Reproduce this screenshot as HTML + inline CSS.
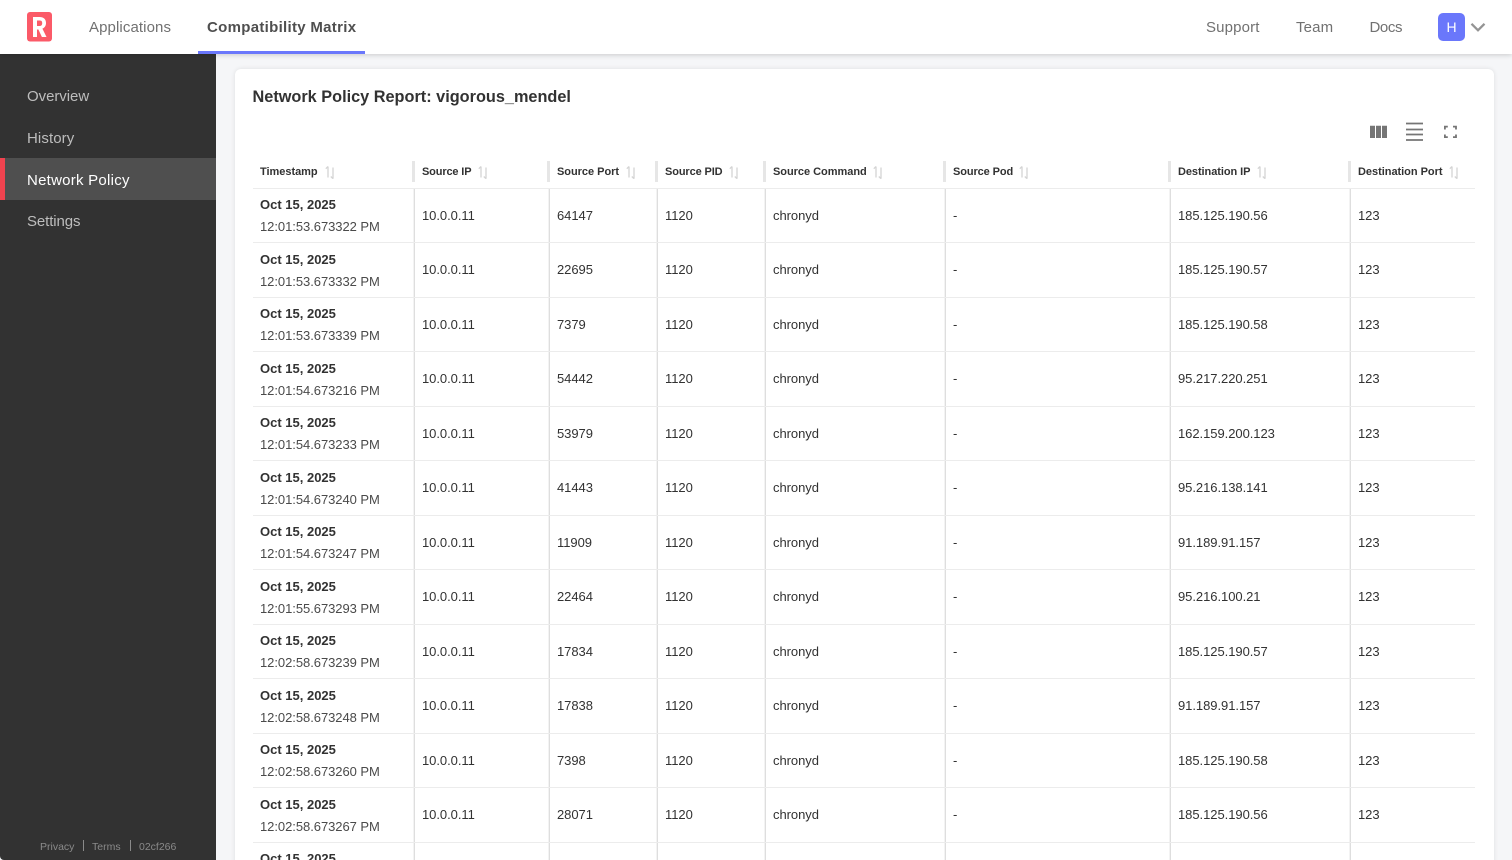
<!DOCTYPE html>
<html lang="en"><head><meta charset="utf-8"><title>Network Policy Report</title>
<style>
*{box-sizing:border-box}
html,body{margin:0;padding:0;width:1512px;height:860px;overflow:hidden;background:#f5f6f8;font-family:"Liberation Sans",sans-serif;color:#323232}
#w{position:relative;width:1512px;height:860px;overflow:hidden;background:#f5f6f8}
.abs,.t,.h,.hd,.vd,.hl,.c{position:absolute}
#top{position:absolute;left:0;top:0;width:1512px;height:54px;background:#fff;box-shadow:0 1px 5px rgba(0,0,0,.18);z-index:5}
.n{position:absolute;top:18px;font-size:15px;line-height:20px;color:#717171;letter-spacing:.15px;white-space:nowrap}
#side{position:absolute;left:0;top:54px;width:216px;height:806px;background:#323232;border-bottom-left-radius:4px;z-index:3}
.s{position:absolute;left:27px;font-size:15px;line-height:20px;color:#bdbdbd;letter-spacing:.1px;white-space:nowrap}
.f{position:absolute;top:786px;font-size:10.5px;line-height:14px;color:#8a8a8a;white-space:nowrap}
#card{position:absolute;left:235px;top:69px;width:1259px;height:820px;background:#fff;border-radius:6px;box-shadow:0 0 5px rgba(0,0,0,.1)}
.h{top:166px;font-size:11px;font-weight:700;line-height:13px;color:#323232;white-space:nowrap;letter-spacing:-.03px}
.hd{top:161px;width:2.500px;height:21px;background:#e6e6e6}
.vd{top:188px;width:2px;height:672px;background:linear-gradient(90deg,#f3f3f3 50%,#dedede 50%)}
.hl{left:253px;width:1222px;height:1px;background:#ececec}
.r{position:absolute;left:0;width:1512px;height:54px}
.r span{position:absolute;top:20px;font-size:13px;line-height:16px;color:#323232;white-space:nowrap;letter-spacing:-.05px}
.x span{top:19.500px}
.r .d{position:absolute;left:260px;top:9px;font-weight:700;color:#323232;letter-spacing:0}
.r .m{position:absolute;left:260px;top:31px;color:#4a4a4a}
.a{left:422px}.b{left:557px}.p{left:665px}.e{left:773px}.o{left:953px}.i{left:1178px}.q{left:1358px}
.sort{position:absolute;top:166px;width:11px;height:13px}
</style></head><body>
<svg width="0" height="0" style="position:absolute"><defs>
<symbol id="so" viewBox="0 0 11 13"><path d="M3 11.500V.5M.8 2.700 3 .5M8 1.500v11.200M5.800 10.500 8 12.700" fill="none" stroke="#d4d4d4" stroke-width="1.300"/></symbol>
</defs></svg>
<div id="w">
<div id="top">
<svg style="position:absolute;left:27px;top:12px" width="25" height="30" viewBox="0 0 25 30"><rect width="25" height="29.500" rx="3" fill="#fb5a68"/><path fill-rule="evenodd" d="M6 25V5h6.500c4 0 6.500 2 6.500 6 0 2.800-1.300 4.700-3.600 5.600L19.500 25h-4.600l-3.500-7.500H10V25zM10 14h2.300c2 0 2.900-.9 2.900-2.900S14.300 8.500 12.300 8.500H10z" fill="#fff"/></svg>
<div class="n" style="left:89px;letter-spacing:.1px">Applications</div>
<div class="n" style="left:207px;font-weight:700;color:#4f4f4f;letter-spacing:.3px">Compatibility Matrix</div>
<div style="position:absolute;left:198px;top:51px;width:167px;height:3px;background:#6a77fb"></div>
<div class="n" style="left:1206px">Support</div>
<div class="n" style="left:1296px">Team</div>
<div class="n" style="left:1369.500px;letter-spacing:-.4px">Docs</div>
<div style="position:absolute;left:1438px;top:13px;width:27px;height:28px;border-radius:5px;background:#6a77fb;color:#fff;font-size:14px;line-height:28px;text-align:center">H</div>
<svg style="position:absolute;left:1470px;top:22px" width="16" height="11" viewBox="0 0 16 11"><path d="M1.500 1.800 8 8.300l6.500-6.500" fill="none" stroke="#949494" stroke-width="2.300"/></svg>
</div>

<div id="side">
<div class="s" style="top:33px;letter-spacing:-.05px">Overview</div>
<div class="s" style="top:75px">History</div>
<div style="position:absolute;left:0;top:104px;width:216px;height:42px;background:#4f4f4f;border-left:5px solid #f0434f"></div>
<div class="s" style="top:117px;color:#fff;letter-spacing:.25px">Network Policy</div>
<div class="s" style="top:158px;letter-spacing:-.1px">Settings</div>
<div class="f" style="left:40px">Privacy</div>
<div class="abs" style="left:83px;top:786px;width:1px;height:11px;background:#8a8a8a"></div>
<div class="f" style="left:92px">Terms</div>
<div class="abs" style="left:130px;top:786px;width:1px;height:11px;background:#8a8a8a"></div>
<div class="f" style="left:139px">02cf266</div>
</div>

<div id="card"></div>
<div class="abs" style="left:252.500px;top:87px;font-size:16.300px;line-height:21px;font-weight:700;color:#323232;white-space:nowrap">Network Policy Report: vigorous_mendel</div>

<svg style="position:absolute;left:1368px;top:120px" width="92" height="24" viewBox="0 0 92 24">
<path d="M2 5.700h5V18H2zM8 5.700h5V18H8zM14 5.700h5V18h-5z" fill="#757575"/>
<path d="M38 3.500h17M38 9.500h17M38 14.500h17M38 20h17" stroke="#757575" stroke-width="1.800" fill="none"/>
<path d="M76.900 9.500V6.600h2.900M85 6.600h3V9.500M88 14.500v2.600h-3M79.800 17.100H76.900v-2.600" stroke="#757575" stroke-width="1.800" fill="none"/>
</svg>

<div class="h" style="left:260px">Timestamp</div><svg class="sort" style="left:325px"><use href="#so"/></svg>
<div class="h" style="left:422px;letter-spacing:-.15px">Source IP</div><svg class="sort" style="left:478px"><use href="#so"/></svg>
<div class="h" style="left:557px">Source Port</div><svg class="sort" style="left:626px"><use href="#so"/></svg>
<div class="h" style="left:665px;letter-spacing:-.12px">Source PID</div><svg class="sort" style="left:729px"><use href="#so"/></svg>
<div class="h" style="left:773px">Source Command</div><svg class="sort" style="left:873px"><use href="#so"/></svg>
<div class="h" style="left:953px;letter-spacing:-.1px">Source Pod</div><svg class="sort" style="left:1019px"><use href="#so"/></svg>
<div class="h" style="left:1178px;letter-spacing:-.07px">Destination IP</div><svg class="sort" style="left:1257px"><use href="#so"/></svg>
<div class="h" style="left:1358px">Destination Port</div><svg class="sort" style="left:1449px"><use href="#so"/></svg>

<div class="hd" style="left:412px"></div><div class="hd" style="left:547px"></div><div class="hd" style="left:655px"></div><div class="hd" style="left:763px"></div><div class="hd" style="left:943px"></div><div class="hd" style="left:1168px"></div><div class="hd" style="left:1348px"></div>
<div class="vd" style="left:413px"></div><div class="vd" style="left:548px"></div><div class="vd" style="left:656px"></div><div class="vd" style="left:764px"></div><div class="vd" style="left:944px"></div><div class="vd" style="left:1169px"></div><div class="vd" style="left:1349px"></div>

<div class="hl" style="top:188px"></div><div class="hl" style="top:242px"></div><div class="hl" style="top:297px"></div><div class="hl" style="top:351px"></div><div class="hl" style="top:406px"></div><div class="hl" style="top:460px"></div><div class="hl" style="top:515px"></div><div class="hl" style="top:569px"></div><div class="hl" style="top:624px"></div><div class="hl" style="top:678px"></div><div class="hl" style="top:733px"></div><div class="hl" style="top:787px"></div><div class="hl" style="top:842px"></div>

<div class="r" style="top:188px"><span class="d">Oct 15, 2025</span><span class="m">12:01:53.673322 PM</span><span class="a">10.0.0.11</span><span class="b">64147</span><span class="p">1120</span><span class="e">chronyd</span><span class="o">-</span><span class="i">185.125.190.56</span><span class="q">123</span></div>
<div class="r x" style="top:242.500px"><span class="d">Oct 15, 2025</span><span class="m">12:01:53.673332 PM</span><span class="a">10.0.0.11</span><span class="b">22695</span><span class="p">1120</span><span class="e">chronyd</span><span class="o">-</span><span class="i">185.125.190.57</span><span class="q">123</span></div>
<div class="r" style="top:297px"><span class="d">Oct 15, 2025</span><span class="m">12:01:53.673339 PM</span><span class="a">10.0.0.11</span><span class="b">7379</span><span class="p">1120</span><span class="e">chronyd</span><span class="o">-</span><span class="i">185.125.190.58</span><span class="q">123</span></div>
<div class="r x" style="top:351.500px"><span class="d">Oct 15, 2025</span><span class="m">12:01:54.673216 PM</span><span class="a">10.0.0.11</span><span class="b">54442</span><span class="p">1120</span><span class="e">chronyd</span><span class="o">-</span><span class="i">95.217.220.251</span><span class="q">123</span></div>
<div class="r" style="top:406px"><span class="d">Oct 15, 2025</span><span class="m">12:01:54.673233 PM</span><span class="a">10.0.0.11</span><span class="b">53979</span><span class="p">1120</span><span class="e">chronyd</span><span class="o">-</span><span class="i">162.159.200.123</span><span class="q">123</span></div>
<div class="r x" style="top:460.500px"><span class="d">Oct 15, 2025</span><span class="m">12:01:54.673240 PM</span><span class="a">10.0.0.11</span><span class="b">41443</span><span class="p">1120</span><span class="e">chronyd</span><span class="o">-</span><span class="i">95.216.138.141</span><span class="q">123</span></div>
<div class="r" style="top:515px"><span class="d">Oct 15, 2025</span><span class="m">12:01:54.673247 PM</span><span class="a">10.0.0.11</span><span class="b">11909</span><span class="p">1120</span><span class="e">chronyd</span><span class="o">-</span><span class="i">91.189.91.157</span><span class="q">123</span></div>
<div class="r x" style="top:569.500px"><span class="d">Oct 15, 2025</span><span class="m">12:01:55.673293 PM</span><span class="a">10.0.0.11</span><span class="b">22464</span><span class="p">1120</span><span class="e">chronyd</span><span class="o">-</span><span class="i">95.216.100.21</span><span class="q">123</span></div>
<div class="r" style="top:624px"><span class="d">Oct 15, 2025</span><span class="m">12:02:58.673239 PM</span><span class="a">10.0.0.11</span><span class="b">17834</span><span class="p">1120</span><span class="e">chronyd</span><span class="o">-</span><span class="i">185.125.190.57</span><span class="q">123</span></div>
<div class="r x" style="top:678.500px"><span class="d">Oct 15, 2025</span><span class="m">12:02:58.673248 PM</span><span class="a">10.0.0.11</span><span class="b">17838</span><span class="p">1120</span><span class="e">chronyd</span><span class="o">-</span><span class="i">91.189.91.157</span><span class="q">123</span></div>
<div class="r" style="top:733px"><span class="d">Oct 15, 2025</span><span class="m">12:02:58.673260 PM</span><span class="a">10.0.0.11</span><span class="b">7398</span><span class="p">1120</span><span class="e">chronyd</span><span class="o">-</span><span class="i">185.125.190.58</span><span class="q">123</span></div>
<div class="r x" style="top:787.500px"><span class="d">Oct 15, 2025</span><span class="m">12:02:58.673267 PM</span><span class="a">10.0.0.11</span><span class="b">28071</span><span class="p">1120</span><span class="e">chronyd</span><span class="o">-</span><span class="i">185.125.190.56</span><span class="q">123</span></div>
<div class="r" style="top:842px"><span class="d">Oct 15, 2025</span></div>
</div>
</body></html>
